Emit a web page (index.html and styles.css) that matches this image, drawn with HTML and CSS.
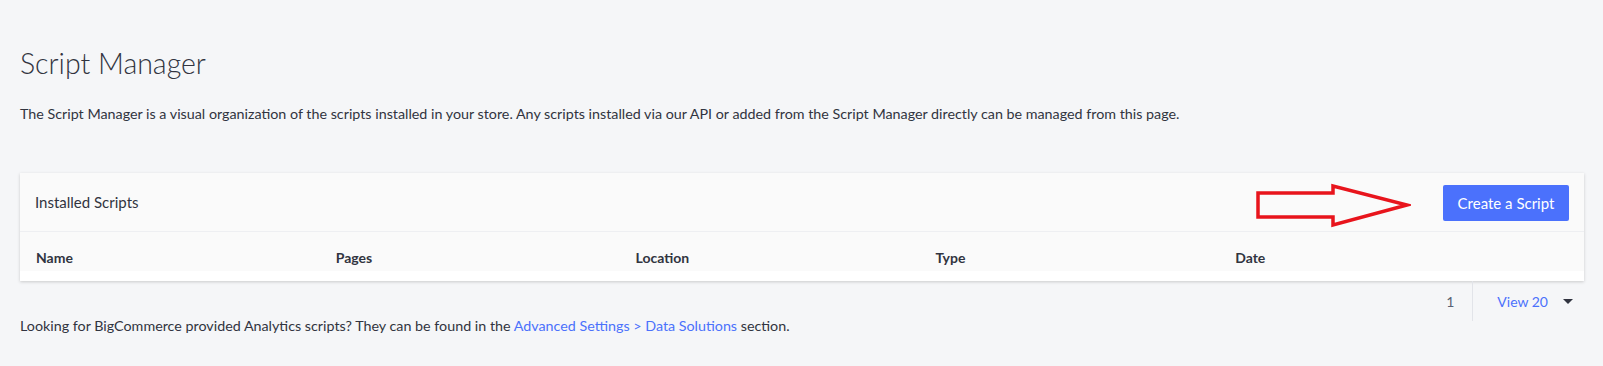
FILE: index.html
```html
<!DOCTYPE html>
<html lang="en">
<head>
  <meta charset="UTF-8">
  <meta name="viewport" content="width=device-width, initial-scale=1.0">
  <title>Script Manager</title>
  <link rel="stylesheet" href="styles.css">
</head>
<body>

  <!-- Page heading -->
  <h1 class="page-title">Script Manager</h1>
  <p class="page-desc">The Script Manager is a visual organization of the scripts installed in your store. Any scripts installed via our API or added from the Script Manager directly can be managed from this page.</p>

  <!-- Installed scripts card -->
  <div class="card">
    <div class="card-header">
      <span class="card-title">Installed Scripts</span>
      <button class="btn-primary">Create a Script</button>

      <!-- red annotation arrow -->
      <svg class="annot-arrow" width="156" height="46" viewBox="0 0 156 46">
        <polygon points="3,10 78,10 78,3 152,22 78,42 78,34 3,34" fill="none" stroke="#e8141c" stroke-width="3.5" stroke-linejoin="miter"/>
      </svg>
    </div>

    <div class="table-head">
      <div class="col">Name</div>
      <div class="col">Pages</div>
      <div class="col">Location</div>
      <div class="col">Type</div>
      <div class="col">Date</div>
      <div class="col"></div>
    </div>
    <div class="table-body"></div>
  </div>

  <!-- Pagination -->
  <div class="pagination">
    <span class="page-num">1</span>
    <span class="divider"></span>
    <span class="view-count">View 20</span>
    <span class="caret"></span>
  </div>

  <p class="footer-note">Looking for BigCommerce provided Analytics scripts? They can be found in the <a href="#">Advanced Settings &gt; Data Solutions</a> section.</p>

</body>
</html>
```

FILE: styles.css
```css
body {
  font-family: "Lato", "Noto Sans", sans-serif;
  background-color: #f5f6f8;
  color: #313440;
  margin: 0;
  padding: 0 19px 0 20px;
}

.page-title {
  font-size: 28.5px;
  font-weight: 300;
  line-height: 36px;
  margin: 45px 0 0 0;
}

.page-desc {
  font-size: 14.3px;
  line-height: 20px;
  margin: 23px 0 0 0;
}

.card {
  margin-top: 49px;
  background-color: #ffffff;
  box-shadow: 0 1px 3px rgba(0, 0, 0, 0.18);
}

.card-header {
  position: relative;
  display: flex;
  justify-content: space-between;
  align-items: center;
  height: 58px;
  padding: 0 15px 0 15px;
  background-color: #fafafa;
  border-bottom: 1px solid #eeeff2;
}

.card-title {
  font-size: 15px;
}

.btn-primary {
  font-family: inherit;
  font-size: 15px;
  color: #ffffff;
  background-color: #4b71fc;
  border: none;
  border-radius: 2px;
  width: 126px;
  height: 36px;
  margin-top: 1px;
  cursor: pointer;
}

.annot-arrow {
  position: absolute;
  left: 1235px;
  top: 10px;
}

.table-head {
  display: grid;
  grid-template-columns: repeat(5, 299.8px) 1fr;
  padding: 16px 0 3px 16px;
  line-height: 20px;
  background-color: #fafafa;
  font-size: 14px;
  font-weight: 700;
}

.table-body {
  height: 10px;
}

.pagination {
  display: flex;
  justify-content: flex-end;
  align-items: center;
  height: 40px;
  padding-right: 11px;
  font-size: 14px;
}

.page-num {
  color: #5a6173;
  margin-right: 18px;
}

.divider {
  width: 1px;
  height: 40px;
  background-color: #e2e4e9;
  margin-right: 24px;
}

.view-count {
  color: #4b71fc;
  margin-right: 15px;
}

.caret {
  width: 0;
  height: 0;
  border-left: 5px solid transparent;
  border-right: 5px solid transparent;
  border-top: 5px solid #313440;
}

.footer-note {
  font-size: 14.3px;
  line-height: 20px;
  margin: -5px 0 0 0;
}

.footer-note a {
  color: #4b71fc;
  text-decoration: none;
}
```
